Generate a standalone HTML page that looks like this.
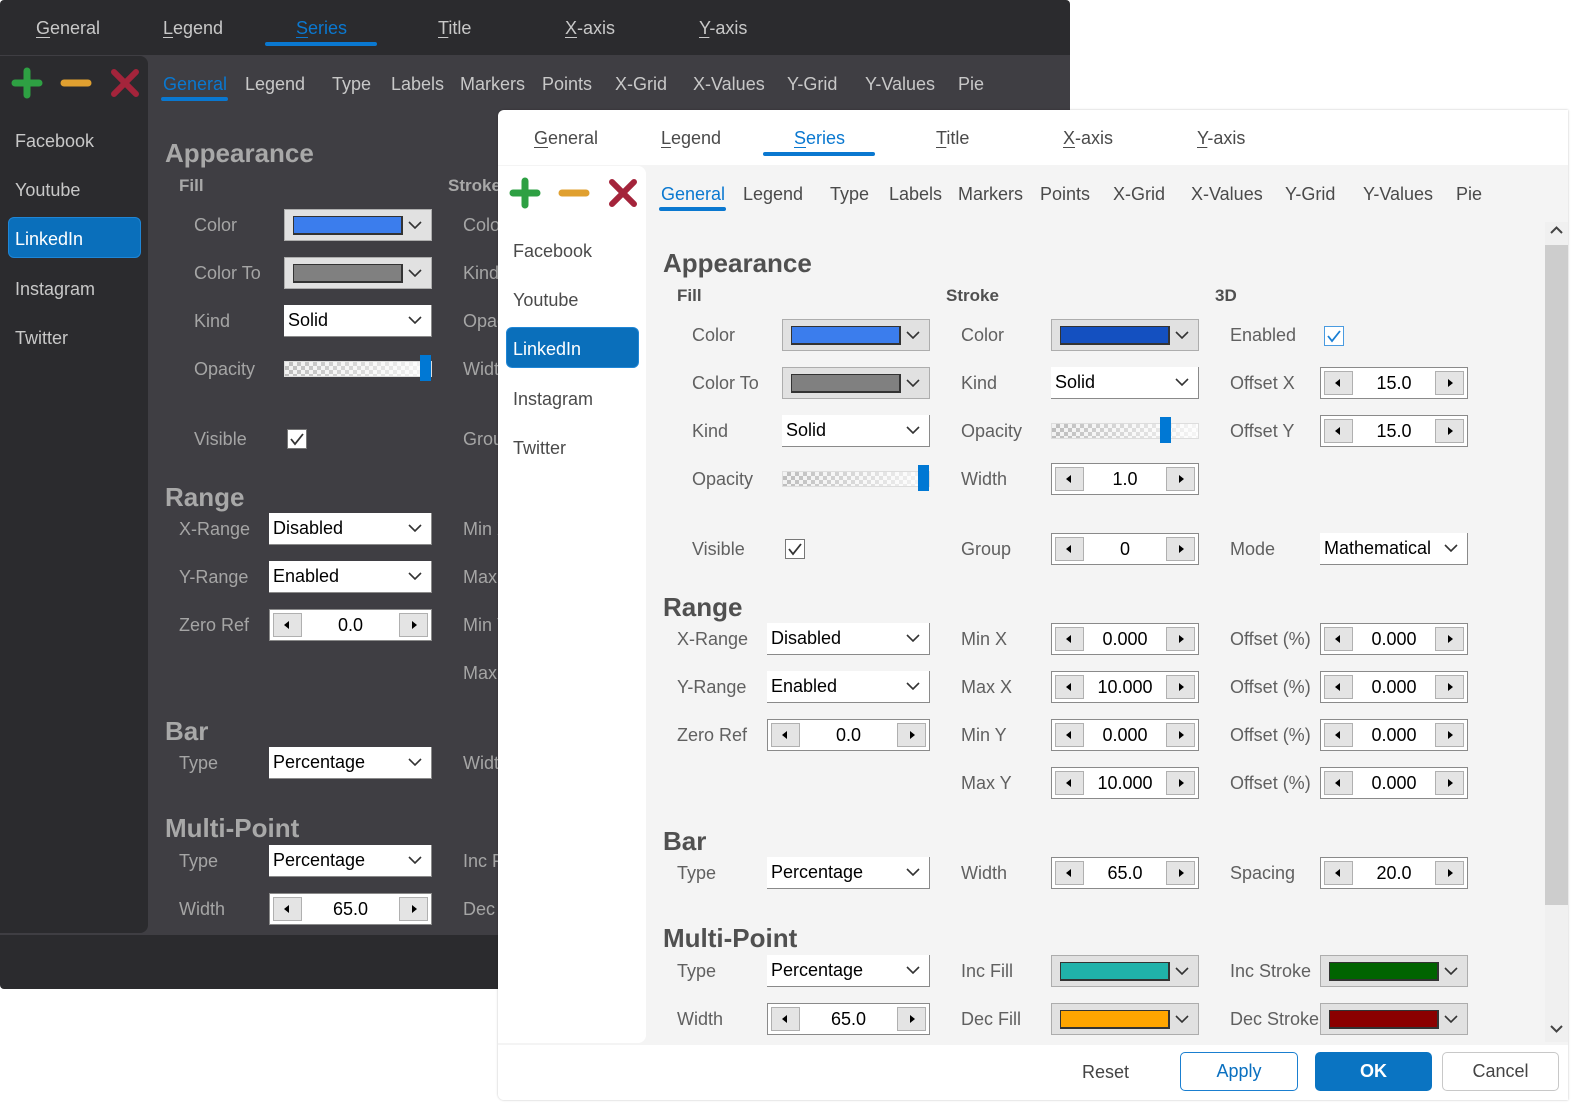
<!DOCTYPE html>
<html><head><meta charset="utf-8"><style>
*{box-sizing:border-box;margin:0;padding:0}
body{width:1574px;height:1103px;background:#fff;position:relative;overflow:hidden;font-family:"Liberation Sans",sans-serif}
.w{position:absolute;width:1070px;height:990px;overflow:hidden}
.w div,.w span,.w svg{position:absolute}
.top{left:0;top:0;width:1070px;height:55px}
.body{left:0;top:55px;width:1070px;height:880px}
.side{left:0;top:56px;width:148px;height:877px;border-radius:0 8px 8px 0}
.bot{left:0;top:935px;width:1070px;height:55px}
.t{top:16px;font-size:18px;line-height:24px;white-space:nowrap}
.st{top:72px;font-size:18px;line-height:24px;white-space:nowrap}
.li{left:15px;font-size:18px;line-height:22px}
.l{font-size:18px;line-height:22px;white-space:nowrap}
.h{font-size:26px;font-weight:bold;line-height:30px}
.sh{font-size:17px;font-weight:bold;line-height:20px;top:176px}
.u{text-decoration:underline;text-underline-offset:3px}
.cd{width:148px;height:32px;background:#e1e1e1;border:1px solid #adadad}
.cd i{position:absolute;left:8px;top:6px;width:110px;height:19px;border:1px solid #333;border-right-width:2px;border-bottom-width:2px}
.cv{right:9px;top:11px}
.cb{height:32px;background:#fff;border-right:1px solid #8a8a8a;border-bottom:1px solid #8a8a8a;font-size:18px;line-height:31px;padding-left:4px;color:#000}
.sp{height:32px;background:#fff;border:1px solid #8a8a8a;font-size:18px;line-height:30px;text-align:center;color:#000}
.sp b{position:absolute;top:3px;width:29px;height:24px;background:#e4e4e4;border:1px solid #b0b0b0}
.sp b.a{left:3px}.sp b.b{right:3px}
.sp b.a:after{content:"";position:absolute;left:10px;top:7px;border:4px solid transparent;border-right:5px solid #000;border-left:0}
.sp b.b:after{content:"";position:absolute;left:12px;top:7px;border:4px solid transparent;border-left:5px solid #000;border-right:0}
.sl{height:16px;background:linear-gradient(90deg,rgba(255,255,255,0),rgba(255,255,255,.85)),repeating-conic-gradient(#bdbdbd 0 25%,#f2f2f2 0 50%) 0 0/8px 8px;border:1px solid #ddd}
.th{width:11px;height:26px;background:#0078d4}
.ck{width:20px;height:20px;border:1px solid #777;background:#fff}
.dark .top,.dark .side,.dark .bot{background:#2b2b2e}
.dark .body{background:#3f3e43}
.dark .t,.dark .st,.dark .li{color:#c8c8c8}
.dark .l{color:#a5a5a5}
.dark .h,.dark .sh{color:#a8a8a8}
.light .top,.light .side,.light .bot{background:#fff}
.light .body{background:#f4f4f4}
.light .t,.light .st,.light .li{color:#4a4a4a}
.light .l{color:#606060}
.light .h,.light .sh{color:#505050}
.blue{color:#0a78d0!important}
.sel{left:8px;top:217px;width:133px;height:41px;background:#0a6fbb;border:1px solid #1f86d6;border-radius:6px}
</style></head><body>

<svg width="0" height="0" style="position:absolute"><defs>
<symbol id="chev" viewBox="0 0 14 8"><polyline points="1,1 7,7 13,1" fill="none" stroke="#333" stroke-width="1.6"/></symbol>
</defs></svg>

<!-- DARK WINDOW -->
<div class="w dark" style="left:0;top:0;height:989px;border-radius:4px">
<div class="top"></div>
<div class="body"></div>
<div class="side"></div>
<div class="bot"></div>
<span class="t" style="left:36px"><span class="u" style="position:static">G</span>eneral</span>
<span class="t" style="left:163px"><span class="u" style="position:static">L</span>egend</span>
<span class="t blue" style="left:296px"><span class="u" style="position:static">S</span>eries</span>
<div style="left:265px;top:42px;width:112px;height:4px;border-radius:2px;background:#0a78d0"></div>
<span class="t" style="left:438px"><span class="u" style="position:static">T</span>itle</span>
<span class="t" style="left:565px"><span class="u" style="position:static">X</span>-axis</span>
<span class="t" style="left:699px"><span class="u" style="position:static">Y</span>-axis</span>
<svg style="left:11px;top:67px" width="32" height="32"><path d="M16 4V28M4 16H28" stroke="#2ea043" stroke-width="7" stroke-linecap="round"/></svg>
<svg style="left:60px;top:67px" width="32" height="32"><path d="M4 16H28" stroke="#e0a030" stroke-width="7" stroke-linecap="round"/></svg>
<svg style="left:109px;top:67px" width="32" height="32"><path d="M5 5L27 27M27 5L5 27" stroke="#a4243b" stroke-width="6" stroke-linecap="round"/></svg>
<span class="li" style="top:130px">Facebook</span>
<span class="li" style="top:179px">Youtube</span>
<div class="sel"></div>
<span class="li" style="top:228px;color:#fff">LinkedIn</span>
<span class="li" style="top:278px">Instagram</span>
<span class="li" style="top:327px">Twitter</span>
<span class="st blue" style="left:163px">General</span>
<div style="left:161px;top:97px;width:67px;height:4px;border-radius:2px;background:#0a78d0"></div>
<span class="st" style="left:245px">Legend</span><span class="st" style="left:332px">Type</span><span class="st" style="left:391px">Labels</span><span class="st" style="left:460px">Markers</span><span class="st" style="left:542px">Points</span><span class="st" style="left:615px">X-Grid</span><span class="st" style="left:693px">X-Values</span><span class="st" style="left:787px">Y-Grid</span><span class="st" style="left:865px">Y-Values</span><span class="st" style="left:958px">Pie</span>
<span class="h" style="left:165px;top:138px">Appearance</span>
<span class="sh" style="left:179px">Fill</span><span class="sh" style="left:448px">Stroke</span>
<span class="l" style="left:194px;top:214px">Color</span><div class="cd" style="left:284px;top:209px"><i style="background:#3b7ded"></i><svg class="cv" width="14" height="8"><use href="#chev"/></svg></div>
<span class="l" style="left:194px;top:262px">Color To</span><div class="cd" style="left:284px;top:257px"><i style="background:#808080"></i><svg class="cv" width="14" height="8"><use href="#chev"/></svg></div>
<span class="l" style="left:194px;top:310px">Kind</span><div class="cb" style="left:284px;top:305px;width:148px">Solid<svg class="cv" width="14" height="8"><use href="#chev"/></svg></div>
<span class="l" style="left:194px;top:358px">Opacity</span><div class="sl" style="left:284px;top:361px;width:148px"></div><div class="th" style="left:420px;top:355px"></div>
<span class="l" style="left:194px;top:428px">Visible</span><div class="ck" style="left:287px;top:429px"><svg style="left:2px;top:2px" width="14" height="14"><polyline points="1,7 5,12 13,2" fill="none" stroke="#333" stroke-width="1.8"/></svg></div>
<span class="l" style="left:463px;top:214px">Color</span><span class="l" style="left:463px;top:262px">Kind</span><span class="l" style="left:463px;top:310px">Opacity</span><span class="l" style="left:463px;top:358px">Width</span><span class="l" style="left:463px;top:428px">Group</span>
<span class="h" style="left:165px;top:482px">Range</span>
<span class="l" style="left:179px;top:518px">X-Range</span><div class="cb" style="left:269px;top:513px;width:163px">Disabled<svg class="cv" width="14" height="8"><use href="#chev"/></svg></div>
<span class="l" style="left:179px;top:566px">Y-Range</span><div class="cb" style="left:269px;top:561px;width:163px">Enabled<svg class="cv" width="14" height="8"><use href="#chev"/></svg></div>
<span class="l" style="left:179px;top:614px">Zero Ref</span><div class="sp" style="left:269px;top:609px;width:163px"><b class="a"></b>0.0<b class="b"></b></div>
<span class="l" style="left:463px;top:518px">Min X</span><span class="l" style="left:463px;top:566px">Max X</span><span class="l" style="left:463px;top:614px">Min Y</span><span class="l" style="left:463px;top:662px">Max Y</span>
<span class="h" style="left:165px;top:716px">Bar</span>
<span class="l" style="left:179px;top:752px">Type</span><div class="cb" style="left:269px;top:747px;width:163px">Percentage<svg class="cv" width="14" height="8"><use href="#chev"/></svg></div>
<span class="l" style="left:463px;top:752px">Width</span>
<span class="h" style="left:165px;top:813px">Multi-Point</span>
<span class="l" style="left:179px;top:850px">Type</span><div class="cb" style="left:269px;top:845px;width:163px">Percentage<svg class="cv" width="14" height="8"><use href="#chev"/></svg></div>
<span class="l" style="left:179px;top:898px">Width</span><div class="sp" style="left:269px;top:893px;width:163px"><b class="a"></b>65.0<b class="b"></b></div>
<span class="l" style="left:463px;top:850px">Inc Fill</span><span class="l" style="left:463px;top:898px">Dec Fill</span>
</div>

<!-- LIGHT WINDOW -->
<div class="w light" style="left:498px;top:110px;box-shadow:0 0 2px rgba(0,0,0,.25);border-radius:6px 0 0 6px">
<div class="top"></div>
<div class="body"></div>
<div class="side"></div>
<div class="bot"></div>
<span class="t" style="left:36px"><span class="u" style="position:static">G</span>eneral</span>
<span class="t" style="left:163px"><span class="u" style="position:static">L</span>egend</span>
<span class="t blue" style="left:296px"><span class="u" style="position:static">S</span>eries</span>
<div style="left:265px;top:42px;width:112px;height:4px;border-radius:2px;background:#0a78d0"></div>
<span class="t" style="left:438px"><span class="u" style="position:static">T</span>itle</span>
<span class="t" style="left:565px"><span class="u" style="position:static">X</span>-axis</span>
<span class="t" style="left:699px"><span class="u" style="position:static">Y</span>-axis</span>
<svg style="left:11px;top:67px" width="32" height="32"><path d="M16 4V28M4 16H28" stroke="#2ea043" stroke-width="7" stroke-linecap="round"/></svg>
<svg style="left:60px;top:67px" width="32" height="32"><path d="M4 16H28" stroke="#e0a030" stroke-width="7" stroke-linecap="round"/></svg>
<svg style="left:109px;top:67px" width="32" height="32"><path d="M5 5L27 27M27 5L5 27" stroke="#a4243b" stroke-width="6" stroke-linecap="round"/></svg>
<span class="li" style="top:130px">Facebook</span>
<span class="li" style="top:179px">Youtube</span>
<div class="sel"></div>
<span class="li" style="top:228px;color:#fff">LinkedIn</span>
<span class="li" style="top:278px">Instagram</span>
<span class="li" style="top:327px">Twitter</span>
<span class="st blue" style="left:163px">General</span>
<div style="left:161px;top:97px;width:67px;height:4px;border-radius:2px;background:#0a78d0"></div>
<span class="st" style="left:245px">Legend</span><span class="st" style="left:332px">Type</span><span class="st" style="left:391px">Labels</span><span class="st" style="left:460px">Markers</span><span class="st" style="left:542px">Points</span><span class="st" style="left:615px">X-Grid</span><span class="st" style="left:693px">X-Values</span><span class="st" style="left:787px">Y-Grid</span><span class="st" style="left:865px">Y-Values</span><span class="st" style="left:958px">Pie</span>

<!-- scrollbar -->
<div style="left:1047px;top:112px;width:23px;height:820px;background:#f0f0f0"></div>
<div style="left:1047px;top:135px;width:23px;height:660px;background:#cdcdcd"></div>
<svg style="left:1052px;top:116px" width="13" height="8"><polyline points="1,7 6.5,1.5 12,7" fill="none" stroke="#444" stroke-width="2"/></svg>
<svg style="left:1052px;top:915px" width="13" height="8"><polyline points="1,1 6.5,6.5 12,1" fill="none" stroke="#444" stroke-width="2"/></svg>

<span class="h" style="left:165px;top:138px">Appearance</span>
<span class="sh" style="left:179px">Fill</span><span class="sh" style="left:448px">Stroke</span><span class="sh" style="left:717px">3D</span>

<span class="l" style="left:194px;top:214px">Color</span><div class="cd" style="left:284px;top:209px"><i style="background:#3b7ded"></i><svg class="cv" width="14" height="8"><use href="#chev"/></svg></div>
<span class="l" style="left:194px;top:262px">Color To</span><div class="cd" style="left:284px;top:257px"><i style="background:#808080"></i><svg class="cv" width="14" height="8"><use href="#chev"/></svg></div>
<span class="l" style="left:194px;top:310px">Kind</span><div class="cb" style="left:284px;top:305px;width:148px">Solid<svg class="cv" width="14" height="8"><use href="#chev"/></svg></div>
<span class="l" style="left:194px;top:358px">Opacity</span><div class="sl" style="left:284px;top:361px;width:148px"></div><div class="th" style="left:420px;top:355px"></div>
<span class="l" style="left:194px;top:428px">Visible</span><div class="ck" style="left:287px;top:429px"><svg style="left:2px;top:2px" width="14" height="14"><polyline points="1,7 5,12 13,2" fill="none" stroke="#333" stroke-width="1.8"/></svg></div>

<span class="l" style="left:463px;top:214px">Color</span><div class="cd" style="left:553px;top:209px"><i style="background:#1450c0"></i><svg class="cv" width="14" height="8"><use href="#chev"/></svg></div>
<span class="l" style="left:463px;top:262px">Kind</span><div class="cb" style="left:553px;top:257px;width:148px">Solid<svg class="cv" width="14" height="8"><use href="#chev"/></svg></div>
<span class="l" style="left:463px;top:310px">Opacity</span><div class="sl" style="left:553px;top:313px;width:148px"></div><div class="th" style="left:662px;top:307px"></div>
<span class="l" style="left:463px;top:358px">Width</span><div class="sp" style="left:553px;top:353px;width:148px"><b class="a"></b>1.0<b class="b"></b></div>
<span class="l" style="left:463px;top:428px">Group</span><div class="sp" style="left:553px;top:423px;width:148px"><b class="a"></b>0<b class="b"></b></div>

<span class="l" style="left:732px;top:214px">Enabled</span><div class="ck" style="left:826px;top:216px;border-color:#4a9be0"><svg style="left:2px;top:2px" width="14" height="14"><polyline points="1,7 5,12 13,2" fill="none" stroke="#1a7fd4" stroke-width="1.8"/></svg></div>
<span class="l" style="left:732px;top:262px">Offset X</span><div class="sp" style="left:822px;top:257px;width:148px"><b class="a"></b>15.0<b class="b"></b></div>
<span class="l" style="left:732px;top:310px">Offset Y</span><div class="sp" style="left:822px;top:305px;width:148px"><b class="a"></b>15.0<b class="b"></b></div>
<span class="l" style="left:732px;top:428px">Mode</span><div class="cb" style="left:822px;top:423px;width:148px">Mathematical<svg class="cv" width="14" height="8"><use href="#chev"/></svg></div>

<span class="h" style="left:165px;top:482px">Range</span>
<span class="l" style="left:179px;top:518px">X-Range</span><div class="cb" style="left:269px;top:513px;width:163px">Disabled<svg class="cv" width="14" height="8"><use href="#chev"/></svg></div>
<span class="l" style="left:179px;top:566px">Y-Range</span><div class="cb" style="left:269px;top:561px;width:163px">Enabled<svg class="cv" width="14" height="8"><use href="#chev"/></svg></div>
<span class="l" style="left:179px;top:614px">Zero Ref</span><div class="sp" style="left:269px;top:609px;width:163px"><b class="a"></b>0.0<b class="b"></b></div>
<span class="l" style="left:463px;top:518px">Min X</span><div class="sp" style="left:553px;top:513px;width:148px"><b class="a"></b>0.000<b class="b"></b></div>
<span class="l" style="left:463px;top:566px">Max X</span><div class="sp" style="left:553px;top:561px;width:148px"><b class="a"></b>10.000<b class="b"></b></div>
<span class="l" style="left:463px;top:614px">Min Y</span><div class="sp" style="left:553px;top:609px;width:148px"><b class="a"></b>0.000<b class="b"></b></div>
<span class="l" style="left:463px;top:662px">Max Y</span><div class="sp" style="left:553px;top:657px;width:148px"><b class="a"></b>10.000<b class="b"></b></div>
<span class="l" style="left:732px;top:518px">Offset (%)</span><div class="sp" style="left:822px;top:513px;width:148px"><b class="a"></b>0.000<b class="b"></b></div>
<span class="l" style="left:732px;top:566px">Offset (%)</span><div class="sp" style="left:822px;top:561px;width:148px"><b class="a"></b>0.000<b class="b"></b></div>
<span class="l" style="left:732px;top:614px">Offset (%)</span><div class="sp" style="left:822px;top:609px;width:148px"><b class="a"></b>0.000<b class="b"></b></div>
<span class="l" style="left:732px;top:662px">Offset (%)</span><div class="sp" style="left:822px;top:657px;width:148px"><b class="a"></b>0.000<b class="b"></b></div>

<span class="h" style="left:165px;top:716px">Bar</span>
<span class="l" style="left:179px;top:752px">Type</span><div class="cb" style="left:269px;top:747px;width:163px">Percentage<svg class="cv" width="14" height="8"><use href="#chev"/></svg></div>
<span class="l" style="left:463px;top:752px">Width</span><div class="sp" style="left:553px;top:747px;width:148px"><b class="a"></b>65.0<b class="b"></b></div>
<span class="l" style="left:732px;top:752px">Spacing</span><div class="sp" style="left:822px;top:747px;width:148px"><b class="a"></b>20.0<b class="b"></b></div>

<span class="h" style="left:165px;top:813px">Multi-Point</span>
<span class="l" style="left:179px;top:850px">Type</span><div class="cb" style="left:269px;top:845px;width:163px">Percentage<svg class="cv" width="14" height="8"><use href="#chev"/></svg></div>
<span class="l" style="left:179px;top:898px">Width</span><div class="sp" style="left:269px;top:893px;width:163px"><b class="a"></b>65.0<b class="b"></b></div>
<span class="l" style="left:463px;top:850px">Inc Fill</span><div class="cd" style="left:553px;top:845px"><i style="background:#20b2aa"></i><svg class="cv" width="14" height="8"><use href="#chev"/></svg></div>
<span class="l" style="left:463px;top:898px">Dec Fill</span><div class="cd" style="left:553px;top:893px"><i style="background:#ffa500"></i><svg class="cv" width="14" height="8"><use href="#chev"/></svg></div>
<span class="l" style="left:732px;top:850px">Inc Stroke</span><div class="cd" style="left:822px;top:845px"><i style="background:#006400"></i><svg class="cv" width="14" height="8"><use href="#chev"/></svg></div>
<span class="l" style="left:732px;top:898px">Dec Stroke</span><div class="cd" style="left:822px;top:893px"><i style="background:#8b0000"></i><svg class="cv" width="14" height="8"><use href="#chev"/></svg></div>

<span class="l" style="left:584px;top:951px;color:#444">Reset</span>
<div style="left:682px;top:942px;width:118px;height:39px;border:1px solid #1a7fd0;border-radius:5px;background:#fff;color:#0a70c0;font-size:18px;line-height:37px;text-align:center">Apply</div>
<div style="left:817px;top:942px;width:117px;height:39px;border-radius:5px;background:#0a74c2;color:#fff;font-weight:bold;font-size:18px;line-height:39px;text-align:center">OK</div>
<div style="left:944px;top:942px;width:117px;height:39px;border:1px solid #c8c8c8;border-radius:5px;background:#fff;color:#444;font-size:18px;line-height:37px;text-align:center">Cancel</div>
</div>
</body></html>
